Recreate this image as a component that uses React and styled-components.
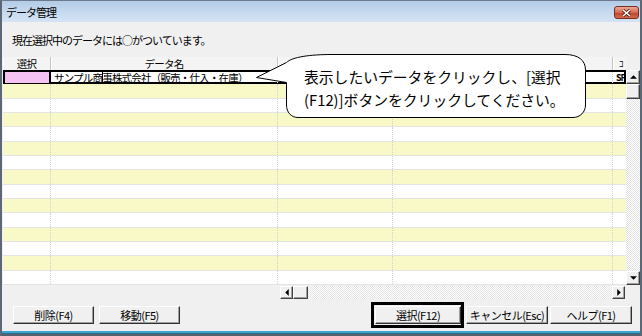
import React from "react";
import styled, { createGlobalStyle } from "styled-components";

const GlobalStyle = createGlobalStyle`
  html, body { margin: 0; padding: 0; background: #fff; }
  body { font-family: "Noto Sans CJK JP", "Noto Sans", sans-serif; }
`;

const jp = `"Noto Sans CJK JP", "Noto Sans", sans-serif`;

const Stage = styled.div`
  position: relative;
  width: 642px;
  height: 336px;
  overflow: hidden;
`;

const Window = styled.div`
  width: 642px;
  height: 336px;
  box-sizing: border-box;
  display: flex;
  flex-direction: column;
  background: #f0f0f0;
  border-top: 1px solid #6b7a8c;
  border-left: 2px solid #5d6877;
  border-right: 2px solid #5d6877;
  font-family: ${jp};
  color: #000;
`;

const TitleBar = styled.div`
  flex: none;
  height: 21px;
  display: flex;
  align-items: center;
  justify-content: space-between;
  padding: 0 1px 0 4px;
  background: linear-gradient(#b4cce7, #c9dbf0 60%, #d4e3f4);
  font-size: 11px;
  letter-spacing: -1px;
`;

const CloseBtn = styled.div`
  width: 25px;
  height: 13px;
  margin-top: 2px;
  box-sizing: border-box;
  border: 1px solid #7a2e22;
  border-radius: 3px;
  background: linear-gradient(#eba896, #d26a50 50%, #c0402a 51%, #d56a4e);
  display: flex;
  align-items: center;
  justify-content: center;
`;

const Message = styled.div`
  flex: none;
  height: 35px;
  box-sizing: border-box;
  padding: 11px 0 0 10px;
  font-size: 11px;
  line-height: 14px;
  letter-spacing: -1px;
`;

const GridWrap = styled.div`
  flex: none;
  display: flex;
  margin-left: 1px;
`;

const Table = styled.div`
  width: 623px;
  display: flex;
  flex-direction: column;
  background: #fff;
`;

const cols = (sel) => `${sel ? 46 : 48}px 227px 115px 220px 1fr`;

const HeaderRow = styled.div`
  height: 13px;
  display: grid;
  grid-template-columns: ${cols(false)};
  background: #f4f4f4;
`;

const HeadCell = styled.div`
  display: flex;
  align-items: center;
  justify-content: center;
  font-size: 10.5px;
  letter-spacing: -0.8px;
  line-height: 12px;
  white-space: nowrap;
  border-right: 1px solid #c4c4c4;
  box-shadow: inset 1px 0 0 #fff;
  &:last-child { border-right: none; font-size: 9px; justify-content: flex-start; padding-left: 6px; }
`;

const Rows = styled.div`
  height: 215px;
  display: grid;
  grid-template-rows: repeat(15, 1fr);
`;

const Row = styled.div`
  display: grid;
  grid-template-columns: ${(p) => cols(p.$selected)};
  box-sizing: border-box;
  min-height: 0;
  background: ${(p) => (p.$yellow ? "#f9f9c8" : "#fff")};
  border-bottom: 1px solid ${(p) => (p.$selected ? "#000" : "#e4e4e4")};
  border-top: ${(p) => (p.$selected ? "2px solid #000" : "none")};
  border-left: ${(p) => (p.$selected ? "2px solid #000" : "none")};
  border-right: ${(p) => (p.$selected ? "2px solid #000" : "none")};
  ${(p) => p.$selected && "border-bottom-width: 2px; position: relative; z-index: 1;"}
`;

const Cell = styled.div`
  min-width: 0;
  display: flex;
  align-items: center;
  white-space: nowrap;
  font-size: 10.5px;
  letter-spacing: -0.8px;
  line-height: 10px;
  border-right: 1px dotted #d2d2d2;
  padding-left: ${(p) => p.$pad || 0}px;
  &:last-child { border-right: none; overflow: hidden; }
`;

const MarkCell = styled(Cell)`
  background: #f5c3f3;
  border-right: 2px solid #000;
`;

const Caret = styled.span`
  display: inline-block;
  width: 1px;
  height: 11px;
  background: #000;
  margin-right: -1px;
`;

const Code = styled.span`
  font-size: 9px;
  font-weight: bold;
  letter-spacing: -1px;
  padding-left: 3px;
`;

const track = `repeating-conic-gradient(#fff 0 25%, #e2e2e2 0 50%) 0 0 / 2px 2px`;

const VScroll = styled.div`
  width: 14px;
  height: 215px;
  margin-top: 13px;
  display: flex;
  flex-direction: column;
  background: ${track};
`;

const HScrollRow = styled.div`
  flex: none;
  height: 15px;
  display: flex;
  align-items: center;
`;

const HScroll = styled.div`
  margin-left: 278px;
  width: 345px;
  height: 13px;
  display: flex;
  background: ${track};
`;

const ScrollBtn = styled.div`
  flex: none;
  width: ${(p) => p.$w || 13}px;
  height: ${(p) => p.$h || 13}px;
  box-sizing: border-box;
  background: #f0f0f0;
  border: 1px solid;
  border-color: #fff #404040 #404040 #fff;
  box-shadow: inset -1px -1px 0 #a0a0a0;
  display: flex;
  align-items: center;
  justify-content: center;
`;

const Spacer = styled.div`
  flex: 1;
`;

const ButtonRow = styled.div`
  flex: none;
  height: 30px;
  display: flex;
  align-items: center;
  padding: 0 8px 0 11px;
`;

const Group = styled.div`
  display: flex;
  align-items: center;
  gap: ${(p) => p.$gap}px;
  margin-left: ${(p) => (p.$right ? "auto" : "0")};
`;

const Button = styled.button`
  width: ${(p) => p.$w || 82}px;
  height: 18px;
  padding: 0;
  box-sizing: border-box;
  font-family: ${jp};
  font-size: 11px;
  letter-spacing: -0.5px;
  line-height: 15px;
  color: #000;
  background: #f0f0f0;
  border: 1px solid;
  border-color: #fff #303030 #303030 #fff;
  box-shadow: inset -1px -1px 0 #a0a0a0;
`;

const Focus = styled.div`
  border: 3px solid #000;
  padding: 1px 0 1px 1px;
  display: flex;
`;

const BottomFrame = styled.div`
  flex: none;
  height: 6px;
  background: linear-gradient(#f0f0f0 0 1px, #3aa5d0 1px 3px, #2f6f8e 3px 4px, #55606e 4px);
`;

const BubbleSvg = styled.svg`
  position: absolute;
  left: 250px;
  top: 50px;
  z-index: 2;
`;

const BubbleText = styled.div`
  position: absolute;
  z-index: 3;
  left: 304px;
  top: 65px;
  font-family: ${jp};
  font-size: 14.8px;
  line-height: 23px;
  white-space: nowrap;
  color: #000;
`;

function Arrow({ dir }) {
  const pts = {
    up: "0,4 4,0 8,4",
    down: "0,0 8,0 4,4",
    left: "4,0 4,8 0,4",
    right: "0,0 0,8 4,4",
  }[dir];
  const vertical = dir === "up" || dir === "down";
  return (
    <svg width={vertical ? 7 : 4} height={vertical ? 4 : 7} viewBox={vertical ? "0 0 8 4" : "0 0 4 8"}>
      <polygon points={pts} fill="#000" />
    </svg>
  );
}

const rows = Array.from({ length: 14 }, (_, i) => i);

export default function App() {
  return (
    <Stage>
      <GlobalStyle />
      <Window>
        <TitleBar>
          <span>データ管理</span>
          <CloseBtn>
            <svg width="9" height="8" viewBox="0 0 9 8">
              <path d="M1 1 L8 7 M8 1 L1 7" stroke="#5a1a10" strokeWidth="3" />
              <path d="M1 1 L8 7 M8 1 L1 7" stroke="#fff" strokeWidth="1.6" />
            </svg>
          </CloseBtn>
        </TitleBar>

        <Message>現在選択中のデータには○がついています。</Message>

        <GridWrap>
          <Table>
            <HeaderRow>
              <HeadCell>選択</HeadCell>
              <HeadCell>データ名</HeadCell>
              <HeadCell />
              <HeadCell />
              <HeadCell>ｺ</HeadCell>
            </HeaderRow>
            <Rows>
              <Row $selected>
                <MarkCell />
                <Cell $pad={3}>
                  サンプル商<Caret />事株式会社（販売・仕入・在庫）
                </Cell>
                <Cell />
                <Cell />
                <Cell>
                  <Code>SF</Code>
                </Cell>
              </Row>
              {rows.map((i) => (
                <Row key={i} $yellow={i % 2 === 0}>
                  <Cell />
                  <Cell />
                  <Cell />
                  <Cell />
                  <Cell />
                </Row>
              ))}
            </Rows>
          </Table>
          <VScroll>
            <ScrollBtn $w={14} $h={14}>
              <Arrow dir="up" />
            </ScrollBtn>
            <ScrollBtn $w={14} $h={15} />
            <Spacer />
            <ScrollBtn $w={14} $h={14}>
              <Arrow dir="down" />
            </ScrollBtn>
          </VScroll>
        </GridWrap>

        <HScrollRow>
          <HScroll>
            <ScrollBtn>
              <Arrow dir="left" />
            </ScrollBtn>
            <ScrollBtn $w={15} />
            <Spacer />
            <ScrollBtn>
              <Arrow dir="right" />
            </ScrollBtn>
          </HScroll>
        </HScrollRow>

        <ButtonRow>
          <Group $gap={5}>
            <Button $w={81}>削除(F4)</Button>
            <Button $w={81}>移動(F5)</Button>
          </Group>
          <Group $right $gap={2}>
            <Focus>
              <Button $w={86}>選択(F12)</Button>
            </Focus>
            <Button $w={82}>キャンセル(Esc)</Button>
            <Button $w={82}>ヘルプ(F1)</Button>
          </Group>
        </ButtonRow>
        <BottomFrame />
      </Window>

      <BubbleSvg width="340" height="72" viewBox="250 50 340 72">
        <path
          d="M256.5 77.5 L286.5 62.5 C292 57, 310 54.5, 332 54.5 L565 54.5 C578 54.5, 585.5 60, 585.5 70 L585.5 105 C585.5 112, 580 117.5, 573 117.5 L298 117.5 C291 117.5, 286.5 112, 286.5 105 L286.5 82.5 Z"
          fill="#fff"
          stroke="#000"
          strokeWidth="1"
        />
      </BubbleSvg>
      <BubbleText>
        表示したいデータをクリックし、[選択
        <br />
        (F12)]ボタンをクリックしてください。
      </BubbleText>
    </Stage>
  );
}
